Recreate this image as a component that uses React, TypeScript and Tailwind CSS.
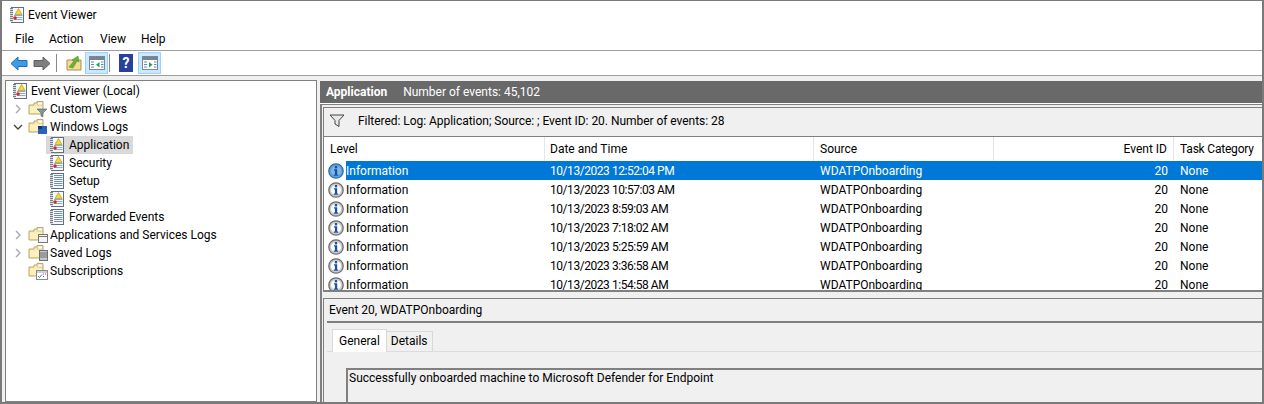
const font = { fontFamily: 'Roboto, "Noto Sans", sans-serif' };

const LogIcon = ({ warn = false }: { warn?: boolean }) => (
  <svg width="16" height="16" viewBox="0 0 16 16" className="shrink-0">
    <rect x="2.500" y="0.500" width="12" height="15" fill="#f6f8fb" stroke="#5c6f8c" />
    <rect x="1" y="1" width="3" height="14" fill="#7b8088" />
    <path d="M1 2.500h3M1 4.500h3M1 6.500h3M1 8.500h3M1 10.500h3M1 12.500h3M1 14.500h3" stroke="#eceff3" strokeWidth="0.8" />
    {warn ? (
      <>
        <path d="M5 8.500h8.500M5 10.500h8.500M5 12.500h8.500" stroke="#8fa9cc" />
        <path d="M9.500 1.500l3.500 6H6z" fill="#f8d92e" stroke="#ad8a12" strokeWidth="0.6" />
        <circle cx="6" cy="11" r="1.800" fill="#c92f2a" />
      </>
    ) : (
      <path d="M5 2.500h8.500M5 4.500h8.500M5 6.500h8.500M5 8.500h8.500M5 10.500h8.500M5 12.500h8.500" stroke="#6f90c0" />
    )}
  </svg>
);

type Badge = "filter" | "win" | "app" | "saved" | "sub";

const FolderIcon = ({ badge }: { badge: Badge }) => (
  <svg width="21" height="18" viewBox="0 0 21 18" className="shrink-0">
    <path d="M1 5h5V3h3V1.500h6V14H1z" fill="#f9e8a8" stroke="#bda566" />
    <path d="M9.500 2h5v3h-5z" fill="#fff" stroke="#c7b27c" strokeWidth="0.6" />
    <path d="M2 6.500h12V13H2z" fill="#fdf0c0" />
    {badge === "filter" && <path d="M9 9h10l-4 4v4l-2-1v-3z" fill="#7f95a6" stroke="#55626c" strokeWidth="0.6" />}
    {badge === "win" && (
      <>
        <rect x="10" y="8" width="9" height="8" fill="#2a62b8" />
        <rect x="10" y="8" width="4" height="3" fill="#12397e" />
      </>
    )}
    {badge === "app" && (
      <>
        <rect x="10.500" y="8.500" width="9" height="8" fill="#f4f4f4" stroke="#777" />
        <path d="M10 10.500h10" stroke="#777" />
      </>
    )}
    {badge === "saved" && (
      <>
        <rect x="11.500" y="6.500" width="8" height="10" fill="#c3c7cb" stroke="#6c6f73" />
        <path d="M12 9h7M12 11h7M12 13h7" stroke="#6c6f73" />
      </>
    )}
    {badge === "sub" && (
      <>
        <rect x="8.500" y="8.500" width="11" height="9" fill="#fff" stroke="#8a8a8a" />
        <path d="M9 10h10" stroke="#8aa4c8" />
        <path d="M10 14l1.500 1.500 2.500-3" stroke="#2e7dc0" fill="none" />
        <path d="M15 12h1M17 12h1M15 14.500h1" stroke="#c8322d" />
      </>
    )}
  </svg>
);

const InfoIcon = ({ selected = false }: { selected?: boolean }) => (
  <svg width="16" height="16" viewBox="0 0 16 16" className="shrink-0">
    <circle cx="8" cy="8" r="7.200" fill={selected ? "#5f9fd8" : "#c9c9c9"} stroke={selected ? "#2f6ea8" : "#6e6e6e"} strokeWidth="1.300" />
    <circle cx="8" cy="8" r="5" fill={selected ? "#7fb6e6" : "#fff"} />
    <rect x="6.800" y="3" width="2.400" height="2.400" fill="#1c4fa8" />
    <path d="M6 6.300h3.200v5.200h1v1.200H5.800v-1.200h1.100v-4H6z" fill="#1c4fa8" />
  </svg>
);

const Chevron = ({ open = false }: { open?: boolean }) => (
  <svg width="10" height="10" viewBox="0 0 10 10" className="shrink-0">
    {open ? (
      <path d="M1 3l4 4 4-4" fill="none" stroke="#404040" strokeWidth="1.300" />
    ) : (
      <path d="M3 1l4 4-4 4" fill="none" stroke="#a6a6a6" strokeWidth="1.300" />
    )}
  </svg>
);

const PaneIcon = ({ right = false }: { right?: boolean }) => (
  <div className="flex h-[22px] w-[23px] shrink-0 items-center justify-center border border-[#99d1ff] bg-[#cce8ff]">
    <svg width="16" height="14" viewBox="0 0 16 14">
      <rect x="0.500" y="0.500" width="15" height="13" fill="#fff" stroke="#7b8894" />
      <rect x="1" y="1" width="14" height="3" fill="#75858f" />
      <path d="M2 6h3M2 8.500h3M2 11h3M12 6h2.500M12 8.500h2.500M12 11h2.500" stroke="#5b86b8" />
      <path d={right ? "M7 6v5.500L10.500 8.750z" : "M10.500 6v5.500L7 8.750z"} fill="#22a83f" />
    </svg>
  </div>
);

const rows = [
  "10/13/2023 12:52:04 PM",
  "10/13/2023 10:57:03 AM",
  "10/13/2023 8:59:03 AM",
  "10/13/2023 7:18:02 AM",
  "10/13/2023 5:25:59 AM",
  "10/13/2023 3:36:58 AM",
  "10/13/2023 1:54:58 AM",
];

const FolderRow = ({ label, badge, chevron, open }: { label: string; badge: Badge; chevron?: boolean; open?: boolean }) => (
  <div className="flex h-[18px] items-center whitespace-nowrap pl-[7px]">
    <div className="w-[15px] shrink-0">{chevron && <Chevron open={open} />}</div>
    <FolderIcon badge={badge} />
    <span className="ml-px">{label}</span>
  </div>
);

const LogRow = ({ label, warn, selected }: { label: string; warn?: boolean; selected?: boolean }) => (
  <div className="flex h-[18px] items-center pl-[40px]">
    <div className={`flex h-[18px] items-center gap-[4px] pl-[3px] pr-[4px] ${selected ? "bg-[#d9d9d9]" : ""}`}>
      <LogIcon warn={warn} />
      <span>{label}</span>
    </div>
  </div>
);

export default function App() {
  return (
    <div style={font} className="flex h-[404px] w-[1264px] flex-col overflow-hidden border-x-2 border-t border-b-2 border-[#7a7a7a] bg-[#f0f0f0] text-[12px] text-black">
      <div className="bg-white">
        <div className="flex h-[26px] items-center gap-[3px] pl-[7px] pt-[2px]">
          <LogIcon warn />
          <span>Event Viewer</span>
        </div>
        <div className="flex h-[23px] items-center pl-[13px]">
          <span className="w-[34px]">File</span>
          <span className="w-[51px]">Action</span>
          <span className="w-[41px]">View</span>
          <span>Help</span>
        </div>
      </div>
      <div className="flex h-[25px] items-center border-t border-[#a0a0a0] bg-white pl-[8px]">
        <svg width="18" height="15" viewBox="0 0 18 15" className="shrink-0"><path d="M1 7.500l7-6.500v3.500h9v6H8V14z" fill="#3f9be8" stroke="#1f6fb8" /></svg>
        <svg width="18" height="15" viewBox="0 0 18 15" className="ml-[5px] shrink-0"><path d="M17 7.500L10 1v3.500H1v6h9V14z" fill="#7f7f7f" stroke="#5f5f5f" /></svg>
        <div className="ml-[5px] h-[18px] w-px shrink-0 bg-[#888]" />
        <svg width="16" height="16" viewBox="0 0 16 16" className="ml-[9px] shrink-0">
          <path d="M1 5h14v10H1z" fill="#f3dc93" stroke="#a98f4f" />
          <path d="M3 12l5-6-2-1 6-4 1 6-2-1-4 7z" fill="#69b23a" stroke="#4a8a25" strokeWidth="0.500" />
        </svg>
        <div className="ml-[3px]"><PaneIcon /></div>
        <div className="ml-px h-[18px] w-px shrink-0 bg-[#888]" />
        <div className="ml-[9px] flex h-[18px] w-[14px] shrink-0 items-center justify-center bg-[#27409a] text-[14px] font-bold leading-none text-white">?</div>
        <div className="ml-[5px]"><PaneIcon right /></div>
      </div>
      <div className="h-[5px] border-t border-[#a0a0a0]" />
      <div className="flex min-h-0 flex-1 pl-[3px]">
        <div className="h-full w-[312px] shrink-0 border border-[#808080] bg-white pt-px">
          <div className="flex h-[18px] items-center gap-[3px] pl-[6px]"><LogIcon warn /><span>Event Viewer (Local)</span></div>
          <FolderRow label="Custom Views" badge="filter" chevron />
          <FolderRow label="Windows Logs" badge="win" chevron open />
          <LogRow label="Application" warn selected />
          <LogRow label="Security" warn />
          <LogRow label="Setup" />
          <LogRow label="System" warn />
          <LogRow label="Forwarded Events" />
          <FolderRow label="Applications and Services Logs" badge="app" chevron />
          <FolderRow label="Saved Logs" badge="saved" chevron />
          <FolderRow label="Subscriptions" badge="sub" />
        </div>
        <div className="ml-[3px] mt-px flex min-w-0 flex-1 flex-col">
          <div className="flex h-[23px] shrink-0 items-center border-b border-white bg-[#696969] pl-[6px] text-white">
            <span className="font-bold">Application</span>
            <span className="ml-[16px]">Number of events: 45,102</span>
          </div>
          <div className="flex min-h-0 flex-1 flex-col border-t border-l-2 border-[#808080] pl-px">
            <div className="mt-[2px] flex h-[29px] shrink-0 items-center border-t border-l border-[#808080] pb-[2px] pl-[5px]">
              <svg width="16" height="14" viewBox="0 0 16 14" className="shrink-0"><path d="M1 1h14l-5 5.500v6l-4-2.500v-3.500z" fill="#e8e8e8" stroke="#444" /></svg>
              <span className="ml-[13px] tracking-[-0.04px]">Filtered: Log: Application; Source: ; Event ID: 20. Number of events: 28</span>
            </div>
            <div className="h-[156px] shrink-0 overflow-hidden border-t border-b-2 border-l border-[#808080] bg-white">
              <div className="grid h-[24px] grid-cols-[221px_269px_180px_180px_1fr]">
                <div className="h-full border-r border-[#e5e5e5] pl-[6px] leading-[24px]">Level</div>
                <div className="h-full border-r border-[#e5e5e5] pl-[5px] leading-[24px]">Date and Time</div>
                <div className="h-full border-r border-[#e5e5e5] pl-[6px] leading-[24px]">Source</div>
                <div className="h-full border-r border-[#e5e5e5] pr-[6px] text-right leading-[24px]">Event ID</div>
                <div className="pl-[6px] leading-[24px] tracking-[-0.2px]">Task Category</div>
              </div>
              <div className="h-[129px] overflow-hidden">
                {rows.map((d, i) => {
                  const sel = i === 0 ? "bg-[#0078d7] text-white" : "";
                  return (
                    <div key={d} className="grid h-[19px] grid-cols-[221px_269px_180px_180px_1fr] items-center">
                      <div className="flex h-full items-center pl-[4px]">
                        <InfoIcon selected={i === 0} />
                        <span className={`ml-[2px] flex h-full flex-1 items-center ${sel}`}>Information</span>
                      </div>
                      <div className={`flex h-full items-center pl-[5px] tracking-[-0.45px] ${sel}`}>{d}</div>
                      <div className={`flex h-full items-center pl-[6px] ${sel}`}>WDATPOnboarding</div>
                      <div className={`flex h-full items-center justify-end pr-[6px] ${sel}`}>20</div>
                      <div className={`flex h-full items-center pl-[6px] ${sel}`}>None</div>
                    </div>
                  );
                })}
              </div>
            </div>
            <div className="mt-[6px] flex min-h-0 flex-1 flex-col border-t border-l border-[#808080] pl-[3px]">
              <div className="flex h-[24px] shrink-0 items-center border-b-2 border-[#808080] pl-[2px]">Event 20, WDATPOnboarding</div>
              <div className="flex h-[29px] shrink-0 items-end border-b border-[#dcdcdc] pl-[5px]">
                <div className="-mb-px flex h-[23px] items-center border-x border-t border-[#d9d9d9] bg-white px-[6px]">General</div>
                <div className="flex h-[20px] items-center border-r border-t border-[#d9d9d9] px-[4px] pb-[2px]">Details</div>
              </div>
              <div className="ml-[9px] min-h-0 flex-1 pl-[10px] pt-[16px]">
                <div className="h-full border-t-2 border-l-2 border-[#808080] pl-px leading-[16px]">Successfully onboarded machine to Microsoft Defender for Endpoint</div>
              </div>
            </div>
          </div>
        </div>
      </div>
    </div>
  );
}
